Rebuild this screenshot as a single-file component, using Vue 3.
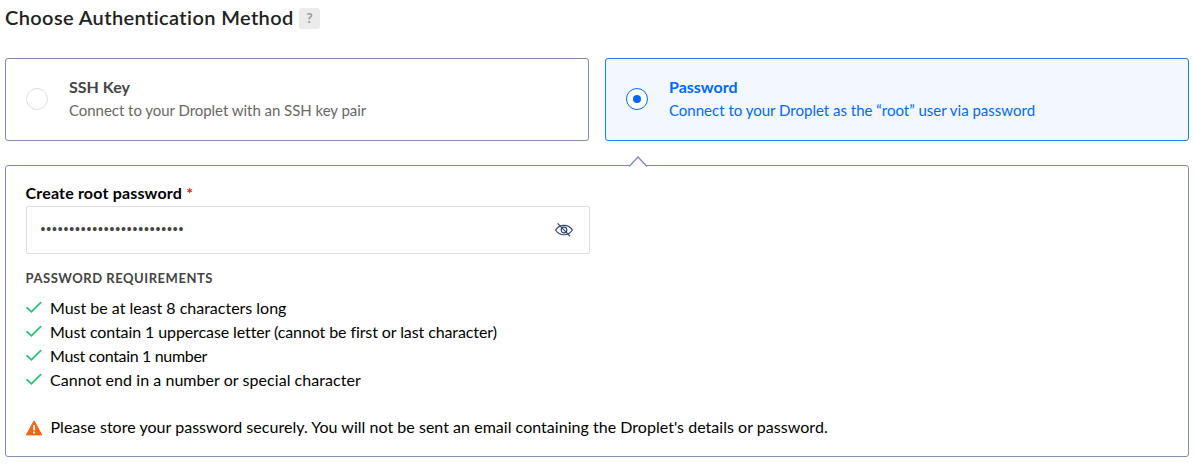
<script setup>
import { ref } from 'vue'

const method = ref('password')
const dots = '•'.repeat(25)
const methods = [
  { id: 'ssh', title: 'SSH Key', text: 'Connect to your Droplet with an SSH key pair' },
  { id: 'password', title: 'Password', text: 'Connect to your Droplet as the “root” user via password' },
]
const requirements = [
  'Must be at least 8 characters long',
  'Must contain 1 uppercase letter (cannot be first or last character)',
  'Must contain 1 number',
  'Cannot end in a number or special character',
]
</script>

<template>
  <section class="auth">
    <header class="heading">
      <h2>Choose Authentication Method</h2>
      <span class="help">?</span>
    </header>

    <div class="methods">
      <div
        v-for="m in methods"
        :key="m.id"
        class="card"
        :class="[m.id, { selected: method === m.id }]"
        @click="method = m.id"
      >
        <span class="radio"></span>
        <div class="card-text">
          <strong>{{ m.title }}</strong>
          <span>{{ m.text }}</span>
        </div>
      </div>
    </div>

    <div class="panel">
      <svg class="pointer" width="20" height="11" viewBox="0 0 20 11">
        <path d="M1 10.4 10 1.1l9 9.3" fill="#fff" stroke="#7f8cb5" stroke-width="1.4" />
      </svg>
      <div class="label">Create root password <span class="star">*</span></div>
      <div class="field">
        <span class="dots">{{ dots }}</span>
        <svg class="eye" width="20" height="16" viewBox="0 0 20 16" fill="none" stroke="#31456f" stroke-width="1.2">
          <path d="M1.6 8C5.5 1.7 14.5 1.7 18.4 8 14.5 14.3 5.5 14.3 1.6 8Z" />
          <circle cx="10" cy="8" r="2.8" />
          <path d="M3.6 1.3 16.2 14.4" />
        </svg>
      </div>

      <h3>PASSWORD REQUIREMENTS</h3>
      <ul>
        <li v-for="(r, i) in requirements" :key="i" :class="'req' + i">
          <svg class="check" width="17" height="13" viewBox="0 0 17 13">
            <path d="M.6 6.3 5.4 10.8 15.2 1.2" fill="none" stroke="#1fc772" stroke-width="1.8" />
          </svg>
          <span>{{ r }}</span>
        </li>
      </ul>

      <div class="warning">
        <svg width="17" height="16" viewBox="0 0 17 16">
          <path d="M8.1.9 15.8 14.9H.4Z" fill="#f9600f" stroke="#f9600f" stroke-linejoin="round" />
          <path d="M8.1 5v5.3M8.1 11.6v1.9" stroke="#fff" stroke-width="1.9" />
        </svg>
        <span>Please store your password securely. You will not be sent an email containing the Droplet's details or password.</span>
      </div>
    </div>
  </section>
</template>

<style>
body { margin: 0; background: #fff; }
</style>

<style scoped>
.auth {
  box-sizing: border-box;
  width: 1194px;
  height: 464px;
  padding: 8px 5px 0;
  font-family: Lato, "Liberation Sans", sans-serif;
  color: #000;
}
h2, h3, ul { margin: 0; padding: 0; }
.heading { display: flex; height: 21px; gap: 5.5px; }
h2 { font-size: 20px; line-height: 19px; font-weight: 600; letter-spacing: .39px; color: #222; white-space: nowrap; width: 288.5px; }
.help {
  width: 21px; height: 21px; border-radius: 3px;
  background: #ebebeb; color: #999;
  font-size: 14px; line-height: 20px; font-weight: 700; text-align: center;
}
.methods { display: grid; grid-template-columns: 1fr 1fr; gap: 16px; margin-top: 29px; }
.card {
  box-sizing: border-box; height: 83px; padding: 0 20px 2px;
  display: flex; align-items: center; gap: 21px;
  border: 1px solid #7f8cb5; border-radius: 3px;
  color: #676767; cursor: pointer;
}
.radio {
  box-sizing: border-box; width: 22px; height: 22px; flex: none;
  display: flex; align-items: center; justify-content: center;
  border: 1px solid #dfdfdf; border-radius: 50%; background: #fff;
}
.card-text { display: flex; flex-direction: column; font-size: 15px; line-height: 24px; white-space: nowrap; }
.card-text strong { font-size: 16px; line-height: 23px; font-weight: 700; color: #444; }
.ssh .card-text > span { letter-spacing: -.04px; }
.card.selected { border-color: #1c7df5; background: #f3f8ff; color: #0069ff; }
.selected .card-text strong { color: #0069ff; }
.selected .radio { border-color: #0069ff; }
.selected .radio::after { content: ""; width: 8px; height: 8px; border-radius: 50%; background: #0069ff; }
.panel {
  position: relative; box-sizing: border-box; height: 292px; margin-top: 24px;
  padding: 17px 20px 0; border: 1px solid #7f8cb5; border-radius: 3px;
}
.pointer { position: absolute; left: 622px; top: -10px; }
.label { margin-left: -.5px; font-size: 16px; line-height: 20px; font-weight: 700; letter-spacing: .18px; }
.star { color: #d31b1b; }
.field {
  box-sizing: border-box; width: 564px; height: 48px; margin-top: 3px; padding: 0 15px 0 14px;
  display: flex; align-items: center; justify-content: space-between;
  border: 1px solid #dfdfdf; border-radius: 2px; color: #444;
}
.dots { margin: 0 0 2px -.5px; font: 14px/16px "Liberation Sans", sans-serif; letter-spacing: .85px; }
h3 { margin: 15px 0 0 -.5px; font-size: 13px; line-height: 18px; font-weight: 700; letter-spacing: .54px; color: #444; }
ul { margin-top: 9px; list-style: none; }
li { display: flex; height: 24px; gap: 7px; font-size: 16px; line-height: 24px; white-space: nowrap; }
.check { margin-top: 5px; }
.req0 { letter-spacing: -.01px; }
.req1 { letter-spacing: -.1px; }
.req2 { letter-spacing: -.33px; }
.req3 { letter-spacing: .05px; }
.warning { display: flex; gap: 7.5px; margin-top: 23px; font-size: 16px; line-height: 24px; letter-spacing: .03px; white-space: nowrap; }
.warning svg { margin-top: 5px; }
</style>
